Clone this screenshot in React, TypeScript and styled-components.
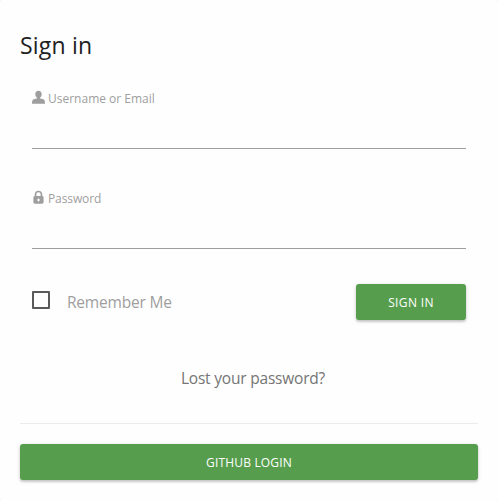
import React from "react";
import styled, { createGlobalStyle } from "styled-components";

const GlobalStyle = createGlobalStyle`
  * { box-sizing: border-box; }
  body { margin: 0; background: #ededed; overflow: hidden; }
`;

const Card = styled.main`
  width: 498px;
  height: 500px;
  padding: 27px 20px 20px;
  background: #fefefe;
  border-radius: 2px;
  font-family: "Open Sans", "Noto Sans", sans-serif;
`;

const Title = styled.h1`
  margin: 0;
  height: 37px;
  font-size: 23px;
  line-height: 36px;
  font-weight: 400;
  letter-spacing: 0.2px;
  color: #212121;
`;

const Form = styled.form`
  padding: 0 12px;
`;

const Field = styled.div`
  display: flex;
  flex-direction: column;
  height: 100px;
  padding-top: 25px;
`;

const FieldLabel = styled.label<{ $tracking: number }>`
  display: flex;
  align-items: center;
  height: 18px;
  gap: 3px;
  font-size: 12px;
  line-height: 18px;
  letter-spacing: ${(p) => p.$tracking}px;
  color: #9e9e9e;

  svg { display: block; flex: none; margin-top: -2px; }
  span { padding-top: 2px; }
`;

const TextInput = styled.input`
  width: 100%;
  height: 42px;
  padding: 0;
  border: 0;
  border-bottom: 1px solid #9e9e9e;
  border-radius: 0;
  outline: none;
  background: transparent;
  font: 16px "Open Sans", sans-serif;
`;

const Actions = styled.div`
  display: flex;
  justify-content: space-between;
  align-items: center;
  height: 36px;
  margin-top: 20px;
`;

const Remember = styled.label`
  display: flex;
  align-items: center;
  gap: 17px;
  height: 36px;
  font-size: 15.5px;
  letter-spacing: -0.2px;
  color: #9e9e9e;
`;

const Checkbox = styled.input`
  appearance: none;
  width: 18px;
  height: 18px;
  margin: -4px 0 0;
  border: 2px solid #5a5a5a;
  border-radius: 1px;
`;

const Button = styled.button<{ $width: string; $tracking: number }>`
  display: block;
  width: ${(p) => p.$width};
  height: 36px;
  padding: 1px 0 0;
  border: 0;
  border-radius: 3px;
  background: #569e4d;
  box-shadow: 0 2px 2px rgba(0, 0, 0, 0.14), 0 1px 4px rgba(0, 0, 0, 0.14);
  color: #fff;
  font: 12px/35px "Open Sans", "Noto Sans", sans-serif;
  letter-spacing: ${(p) => p.$tracking}px;
  text-transform: uppercase;
`;

const LostPassword = styled.a`
  display: block;
  height: 24px;
  margin: 46px 0 33px;
  padding-left: 8px;
  text-align: center;
  font-size: 15.5px;
  line-height: 24px;
  letter-spacing: -0.2px;
  color: #757575;
`;

const Divider = styled.hr`
  height: 1px;
  margin: 0 0 20px;
  border: 0;
  background: #ebebeb;
`;

const UserIcon = () => (
  <svg width="13" height="14" viewBox="0 0 13 14" fill="currentColor">
    <path d="M6.5.7C4.600.7 3.300 2 3.300 3.900c0 1.600.6 2.900 1.600 3.700v.8L1.700 9.300C.4 9.900 0 11.100 0 13.700h13c0-2.600-.4-3.800-1.700-4.400L8.100 8.400v-.8c1-.8 1.600-2.100 1.600-3.700C9.700 2 8.400.7 6.500.7Z" />
  </svg>
);

const LockIcon = () => (
  <svg width="13" height="14" viewBox="0 0 13 14" fill="currentColor">
    <path
      fillRule="evenodd"
      d="M2.700 6V4.500C2.700 2.100 4.200.7 6.500.7s3.800 1.400 3.800 3.800V6c.9.2 1.300.7 1.300 1.600v4.500c0 1-.6 1.600-1.600 1.600H3c-1 0-1.600-.6-1.600-1.600V7.600c0-.9.4-1.400 1.300-1.600Zm1.700-.1h4.200V4.500c0-1.500-.7-2.300-2.100-2.300s-2.100.8-2.100 2.300v1.400ZM6 8.400v1H5v1h1v1h1v-1h1v-1H7v-1H6Z"
    />
  </svg>
);

export default function App() {
  return (
    <>
      <GlobalStyle />
      <Card>
        <Title>Sign in</Title>
        <Form onSubmit={(e) => e.preventDefault()}>
          <Field>
            <FieldLabel htmlFor="username" $tracking={0}>
              <UserIcon />
              <span>Username or Email</span>
            </FieldLabel>
            <TextInput id="username" />
          </Field>
          <Field>
            <FieldLabel htmlFor="password" $tracking={-0.1}>
              <LockIcon />
              <span>Password</span>
            </FieldLabel>
            <TextInput id="password" type="password" />
          </Field>
          <Actions>
            <Remember>
              <Checkbox type="checkbox" />
              <span>Remember Me</span>
            </Remember>
            <Button type="submit" $width="110px" $tracking={0.35}>Sign in</Button>
          </Actions>
        </Form>
        <LostPassword>Lost your password?</LostPassword>
        <Divider />
        <Button type="button" $width="100%" $tracking={0.18}>Github Login</Button>
      </Card>
    </>
  );
}
